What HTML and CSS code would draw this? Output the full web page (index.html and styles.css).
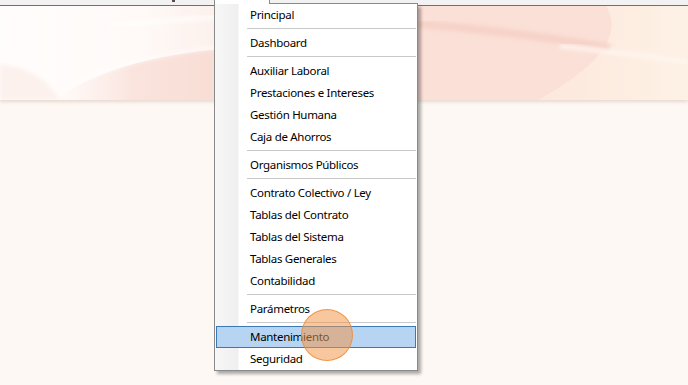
FILE: index.html
```html
<!DOCTYPE html>
<html lang="es">

<head>
  <meta charset="UTF-8">
  <meta name="viewport" content="width=device-width, initial-scale=1.0">
  <title>Menú</title>
  <link rel="stylesheet" href="styles.css">
</head>

<body>
  <div class="topbar"><span class="caret"></span></div>

  <div class="banner">
    <svg class="swoosh" viewBox="0 0 688 94" preserveAspectRatio="none">
      <defs>
        <linearGradient id="base" x1="0" y1="0" x2="1" y2="0">
          <stop offset="0" stop-color="#fffdfc" />
          <stop offset="0.2" stop-color="#fffaf8" />
          <stop offset="0.32" stop-color="#fcf0eb" />
          <stop offset="0.62" stop-color="#fbe4dc" />
          <stop offset="0.82" stop-color="#fde9de" />
          <stop offset="1" stop-color="#fdf1e5" />
        </linearGradient>
        <linearGradient id="arc" x1="0" y1="0" x2="1" y2="0">
          <stop offset="0" stop-color="#fbebe6" stop-opacity="0" />
          <stop offset="0.45" stop-color="#fae4dd" />
          <stop offset="1" stop-color="#f8dcd3" />
        </linearGradient>
        <filter id="soft"><feGaussianBlur stdDeviation="2" /></filter>
      </defs>
      <rect width="688" height="94" fill="url(#base)" />
      <path d="M0 58 Q40 62 60 94 L0 94 Z" fill="#fcf1ed" filter="url(#soft)" />
      <path d="M55 94 Q110 52 230 42 L230 94 Z" fill="url(#arc)" />
      <path d="M70 80 Q130 50 230 40" stroke="#fff" stroke-width="2" fill="none" opacity="0.9" filter="url(#soft)" />
      <path d="M110 20 Q170 14 230 10" stroke="#fff" stroke-width="3" fill="none" filter="url(#soft)" />
      <path d="M418 0 L606 0 Q632 42 538 94 L418 94 Z" fill="#fbe0d7" />
      <path d="M418 18 Q520 26 610 42" stroke="#f6d2c7" stroke-width="8" fill="none" filter="url(#soft)" />
      <path d="M560 40 Q620 46 688 56" stroke="#fff7f2" stroke-width="4" fill="none" filter="url(#soft)" />
    </svg>
  </div>

  <nav class="menu">
    <div class="menu-head">
      <div class="menu-tab"></div>
      <div class="menu-edge"></div>
    </div>
    <ul class="menu-list">
      <li class="item">Principal</li>
      <li class="sep"></li>
      <li class="item">Dashboard</li>
      <li class="sep"></li>
      <li class="item">Auxiliar Laboral</li>
      <li class="item">Prestaciones e Intereses</li>
      <li class="item">Gestión Humana</li>
      <li class="item">Caja de Ahorros</li>
      <li class="sep"></li>
      <li class="item">Organismos Públicos</li>
      <li class="sep"></li>
      <li class="item">Contrato Colectivo / Ley</li>
      <li class="item">Tablas del Contrato</li>
      <li class="item">Tablas del Sistema</li>
      <li class="item">Tablas Generales</li>
      <li class="item">Contabilidad</li>
      <li class="sep"></li>
      <li class="item">Parámetros</li>
      <li class="sep"></li>
      <li class="item active">Mantenimiento</li>
      <li class="item">Seguridad</li>
    </ul>
  </nav>

  <!-- indicador de clic -->
  <div class="click"></div>
</body>

</html>
```

FILE: styles.css
```css
body {
  margin: 0;
  padding: 0;
  width: 688px;
  height: 385px;
  overflow: hidden;
  background: #fdf8f4;
  font-family: "Noto Sans", "Open Sans", sans-serif;
  position: relative;
}

.topbar {
  height: 5px;
  background: #f2f2f2;
  border-bottom: 1px solid #707070;
  display: flex;
}

.caret {
  width: 3px;
  height: 2px;
  margin-left: 172px;
  background: #5a4a48;
}

.banner {
  height: 94px;
  box-shadow: 0 2px 3px rgba(190, 150, 130, 0.3);
}

.swoosh {
  display: block;
  width: 100%;
  height: 100%;
}

.menu {
  position: absolute;
  left: 214px;
  top: 0;
  width: 204px;
}

.menu-head {
  display: flex;
  height: 4px;
}

.menu-tab {
  width: 54px;
  background: #fff;
  border-left: 1px solid #8a8a8a;
  border-right: 1px solid #8a8a8a;
}

.menu-edge {
  flex: 1;
  border-bottom: 1px solid #8a8a8a;
}

.menu-list {
  list-style: none;
  margin: 0;
  padding: 0;
  border: 1px solid #8a8a8a;
  border-top: none;
  background: linear-gradient(to right, #f7f7f7 0, #efefef 23px, #fff 24px);
  box-shadow: 3px 3px 3px rgba(0, 0, 0, 0.32);
}

.item {
  height: 22px;
  line-height: 22px;
  padding-left: 35px;
  font-size: 11.5px;
  letter-spacing: -0.3px;
  color: #000;
}

.item.active {
  height: 20px;
  line-height: 20px;
  margin: 0 1px;
  padding-left: 33px;
  border: 1px solid #3a78b6;
  background: #b7d5f3;
}

.sep {
  height: 6px;
  margin: 0 1px 0 32px;
  background: linear-gradient(#fff 2px, #c9c9c9 2px, #c9c9c9 3px, #fff 3px);
}

.click {
  position: absolute;
  left: 301px;
  top: 309px;
  width: 50px;
  height: 50px;
  border-radius: 50%;
  background: rgba(241, 149, 72, 0.53);
  border: 1.5px solid rgba(238, 140, 55, 0.85);
}
```
